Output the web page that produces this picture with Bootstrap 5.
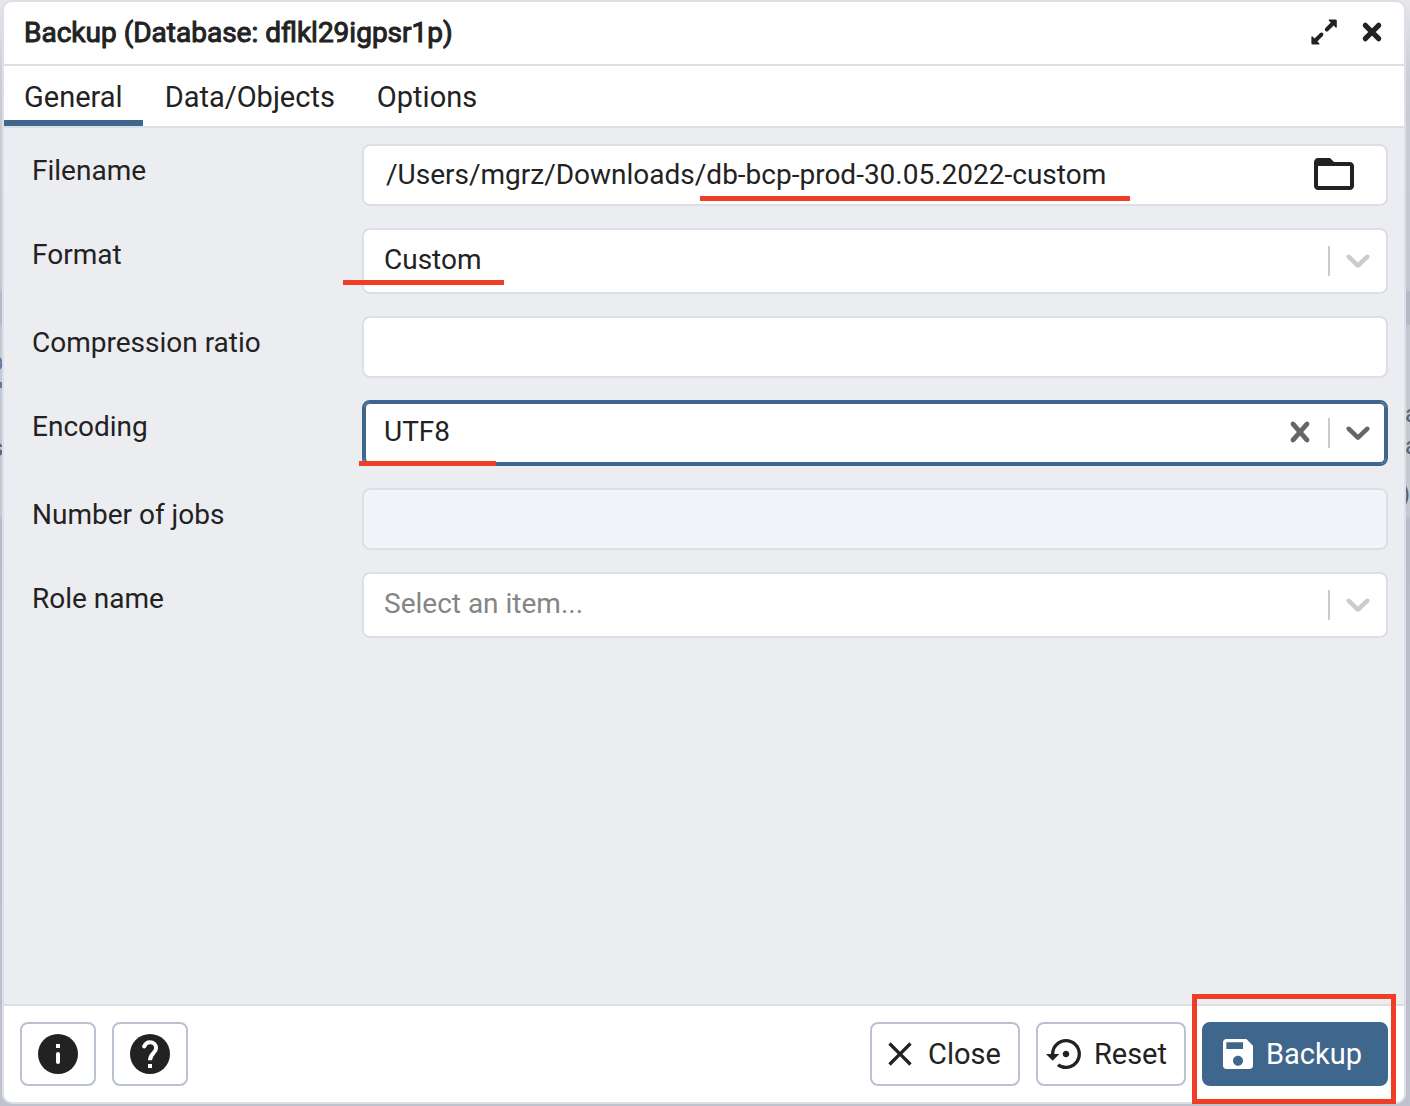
<!DOCTYPE html>
<html lang="en">
<head>
<meta charset="utf-8">
<meta name="viewport" content="width=device-width, initial-scale=1">
<title>Backup</title>
<link rel="stylesheet" href="https://cdn.jsdelivr.net/npm/bootstrap@5.3.0/dist/css/bootstrap.min.css">
<style>
  :root { --ink: #222; --line: #dddfe6; --brand: #3f668d; --pen: #ee3f26; --edge: #bac1d0; }
  body { font-family: Roboto, "Liberation Sans", sans-serif; font-size: 28px; line-height: 36px; color: var(--ink);
    background: linear-gradient(#e6e6eb 0, #c9ccd5 80px, #c3c8d0 290px, #b5b9c6 292px, #b5b9c6 324px, #c3c8d0 326px, #c3c8d0 515px, #b8bcc8 520px, #bec2ce 100%); }
  svg { display: block; fill: currentColor; flex: none; }
  .behind { z-index: 0; color: #5c616b; font-size: 24px; line-height: 32px; }
  .behind-left { left: -10px; top: 346px; color: #5a7ba0; }
  .behind-left2 { left: -9px; top: 432px; }
  .behind-right { right: -8px; top: 398px; }
  .behind-right2 { right: 0; top: 478px; }
  .behind-tab { left: 0; top: 382px; width: 2px; height: 6px; background: #5a7ba0; }
  .screen { min-height: 100vh; padding: 0 4px 2px 2px; }
  .dialog-box { border: 2px solid var(--line); border-radius: 10px; background: #fff; z-index: 1; }
  .title-bar { height: 64px; padding: 0 12px 2px 20px; border-bottom: 2px solid var(--line); }
  .title-bar h1 { font-size: 28px; font-weight: 400; line-height: 36px; padding-top: 2px; -webkit-text-stroke: 1px currentColor; }
  .plain-btn { border: 0; background: none; padding: 0; color: inherit; }
  .tab-strip { border-bottom: 2px solid var(--line); gap: 2px; }
  .tab-strip .nav-link { height: 60px; padding: 6px 20px 0; font-size: 29px; line-height: 50px; color: var(--ink); border-radius: 0; border-bottom: 6px solid transparent; }
  .tab-strip .nav-link.active { border-bottom-color: var(--brand); }
  .form-area { background: #ecedf1; padding: 16px; gap: 22px; }
  .form-area .form-label { padding: 9px 12px 0; margin: 0; }
  .form-area .row { padding: 0; }
  .field { border: 2px solid var(--line); border-radius: 8px; background: #fff; height: 62px; width: 100%; }
  .field-select { height: 66px; }
  .field input, .field select { border: 0; outline: 0; background: none; color: inherit; appearance: none; font-size: 28px; line-height: 36px; min-width: 0; height: 100%; padding: 0 20px 2px; flex: 1; }
  .field .path-input { padding: 0 22px 2px; }
  .field select.empty { color: #858585; }
  .field.off { background: #f3f4f9; }
  .tools { gap: 8px; padding-right: 8px; color: #ccc; pointer-events: none; }
  .tools i { width: 2px; height: 30px; background: #ccc; }
  .tools svg { margin-bottom: 2px; }
  .field.focused { border-color: var(--brand); box-shadow: inset 0 0 0 2px var(--brand); }
  .focused svg { color: #666; }
  .folder-btn { margin-right: 28px; padding-bottom: 2px; }
  .pen-line { position: absolute; height: 5px; background: var(--pen); z-index: 2; }
  .pen-file { left: 338px; top: 52px; width: 430px; }
  .pen-format { left: -19px; top: 52px; width: 161px; }
  .pen-enc { left: -3px; bottom: 0; width: 137px; }
  .pen-box { position: absolute; inset: -28px -8px -18px -10px; border: 5px solid var(--pen); pointer-events: none; }
  .foot { border-top: 2px solid var(--line); padding: 16px; gap: 16px; }
  .foot .btn { height: 64px; border: 2px solid var(--edge); border-radius: 8px; background: #fff; color: var(--ink); font-size: 29px; line-height: 36px; gap: 8px; padding: 0 17px 0 8px; }
  .foot .btn-square { width: 76px; padding: 0; }
  .foot .btn-main { background: var(--brand); border-color: var(--brand); color: #fff; padding: 0 24px 0 14px; }
</style>
<script src="https://cdn.jsdelivr.net/npm/bootstrap@5.3.0/dist/js/bootstrap.bundle.min.js"></script>
</head>
<body>
<svg class="d-none" aria-hidden="true">
  <symbol id="chevron" viewBox="0 0 20 20"><path d="M4.516 7.548c.436-.446 1.043-.481 1.576 0L10 11.295l3.908-3.747c.533-.481 1.141-.446 1.574 0 .436.445.408 1.197 0 1.615-.406.418-4.695 4.502-4.695 4.502-.217.223-.502.335-.787.335s-.57-.112-.789-.335c0 0-4.287-4.084-4.695-4.502s-.436-1.17 0-1.615z"/></symbol>
</svg>
<div class="screen d-flex position-relative overflow-hidden">
  <div aria-hidden="true">
    <span class="behind behind-left position-absolute">p</span>
    <span class="behind behind-tab position-absolute"></span>
    <span class="behind behind-left2 position-absolute">s</span>
    <span class="behind behind-right position-absolute">a<br>a</span>
    <span class="behind behind-right2 position-absolute">)</span>
  </div>
  <main class="dialog-box d-flex flex-column flex-grow-1 position-relative">
    <header class="title-bar d-flex align-items-center justify-content-between">
      <h1 class="m-0">Backup (Database: dflkl29igpsr1p)</h1>
      <div class="d-flex align-items-center gap-2">
        <button class="plain-btn" type="button" aria-label="Maximize">
          <svg width="40" height="40" viewBox="0 0 40 40"><path d="M25.500 7.500h6q1.300 0 1.300 1.300v6q0 1.500-1.200.6l-1.900-1.900-5.600 5.600q-1.500 1.100-2.700-.2-1.300-1.300-.2-2.700l5.600-5.600-1.900-1.900q-.8-1.200.6-1.200zM14.700 32.500h-6q-1.300 0-1.300-1.300v-6q0-1.500 1.200-.6l1.900 1.900 5.600-5.600q1.500-1.100 2.700.2 1.300 1.300.2 2.700l-5.600 5.600 1.900 1.900q.8 1.200-.6 1.200z"/></svg>
        </button>
        <button class="plain-btn" type="button" aria-label="Close dialog">
          <svg width="40" height="40" viewBox="0 0 40 40"><path d="M13.300 13.300l13.400 13.400M26.700 13.300L13.300 26.700" stroke="currentColor" stroke-width="5.200" stroke-linecap="round"/></svg>
        </button>
      </div>
    </header>
    <nav class="nav tab-strip" aria-label="Backup settings">
      <a class="nav-link active" href="#general" aria-current="page">General</a>
      <a class="nav-link" href="#objects">Data/Objects</a>
      <a class="nav-link" href="#options">Options</a>
    </nav>
    <form class="form-area d-flex flex-column flex-grow-1" id="general">
      <div class="row g-0">
        <label class="form-label col-3" for="filename">Filename</label>
        <div class="col-9 position-relative">
          <div class="field d-flex align-items-center">
            <input class="path-input" id="filename" type="text" value="/Users/mgrz/Downloads/db-bcp-prod-30.05.2022-custom">
            <button class="plain-btn folder-btn" type="button" aria-label="Select file">
              <svg width="48" height="48" viewBox="0 0 24 24"><path d="M20 6h-8l-2-2H4c-1.100 0-1.990.9-1.990 2L2 18c0 1.100.9 2 2 2h16c1.100 0 2-.9 2-2V8c0-1.100-.9-2-2-2zm0 12H4V8h16v10z"/></svg>
            </button>
          </div>
          <span class="pen-line pen-file"></span>
        </div>
      </div>
      <div class="row g-0">
        <label class="form-label col-3" for="format">Format</label>
        <div class="col-9 position-relative">
          <div class="field field-select d-flex align-items-center">
            <select id="format"><option>Custom</option></select>
            <span class="tools d-flex align-items-center"><i></i><svg width="40" height="40"><use href="#chevron"/></svg></span>
          </div>
          <span class="pen-line pen-format"></span>
        </div>
      </div>
      <div class="row g-0">
        <label class="form-label col-3" for="ratio">Compression ratio</label>
        <div class="col-9"><div class="field d-flex"><input id="ratio" type="text"></div></div>
      </div>
      <div class="row g-0">
        <label class="form-label col-3" for="encoding">Encoding</label>
        <div class="col-9 position-relative">
          <div class="field field-select focused d-flex align-items-center">
            <select id="encoding"><option>UTF8</option></select>
            <span class="tools d-flex align-items-center">
              <button class="plain-btn" type="button" aria-label="Clear encoding">
                <svg width="40" height="40" viewBox="0 0 20 20"><path d="M14.348 14.849c-.469.469-1.229.469-1.697 0L10 11.819l-2.651 3.029c-.469.469-1.229.469-1.697 0-.469-.469-.469-1.229 0-1.697l2.758-3.150-2.759-3.152c-.469-.469-.469-1.228 0-1.697s1.228-.469 1.697 0L10 8.183l2.651-3.031c.469-.469 1.228-.469 1.697 0s.469 1.229 0 1.697l-2.758 3.152 2.758 3.150c.469.469.469 1.229 0 1.698z"/></svg>
              </button>
              <i></i><svg width="40" height="40"><use href="#chevron"/></svg>
            </span>
          </div>
          <span class="pen-line pen-enc"></span>
        </div>
      </div>
      <div class="row g-0">
        <label class="form-label col-3" for="jobs">Number of jobs</label>
        <div class="col-9"><div class="field off d-flex"><input id="jobs" type="text" disabled></div></div>
      </div>
      <div class="row g-0">
        <label class="form-label col-3" for="role">Role name</label>
        <div class="col-9">
          <div class="field field-select d-flex align-items-center">
            <select class="empty" id="role"><option>Select an item...</option></select>
            <span class="tools d-flex align-items-center"><i></i><svg width="40" height="40"><use href="#chevron"/></svg></span>
          </div>
        </div>
      </div>
    </form>
    <footer class="foot d-flex align-items-center">
      <button class="btn btn-square d-flex align-items-center justify-content-center" type="button" aria-label="SQL help">
        <svg width="40" height="40" viewBox="0 0 40 40"><circle cx="20" cy="20" r="20"/><path fill="#fff" d="M18 10h4v4h-4z"/><rect fill="#fff" x="18" y="18" width="4" height="12" rx="2"/></svg>
      </button>
      <button class="btn btn-square d-flex align-items-center justify-content-center" type="button" aria-label="Help">
        <svg width="40" height="40" viewBox="0 0 40 40"><circle cx="20" cy="20" r="20"/><path d="M14.200 12.400C15.200 9.600 17.300 8 20 8c3.500 0 6.100 2.500 6.100 5.700 0 5-6.100 5.600-6.100 12.300" transform="translate(0 .2)" fill="none" stroke="#fff" stroke-width="4"/><circle cx="14.200" cy="12.600" r="2" fill="#fff"/><path fill="#fff" d="M18 30h4v4h-4z"/></svg>
      </button>
      <button class="btn d-flex align-items-center ms-auto" type="button">
        <svg width="40" height="40" viewBox="0 0 24 24"><path d="M19 6.410L17.590 5 12 10.590 6.410 5 5 6.410 10.590 12 5 17.590 6.410 19 12 13.410 17.590 19 19 17.590 13.410 12z"/></svg>
        Close
      </button>
      <button class="btn d-flex align-items-center" type="reset" form="general">
        <svg width="40" height="40" viewBox="0 0 24 24"><path d="M14 12c0-1.100-.9-2-2-2s-2 .9-2 2 .9 2 2 2 2-.9 2-2zm-2-9c-4.970 0-9 4.030-9 9H0l4 4 4-4H5c0-3.870 3.130-7 7-7s7 3.130 7 7-3.130 7-7 7c-1.510 0-2.910-.49-4.060-1.300l-1.420 1.440C8.040 20.300 9.940 21 12 21c4.970 0 9-4.030 9-9s-4.030-9-9-9z"/></svg>
        Reset
      </button>
      <div class="position-relative">
        <button class="btn btn-main d-flex align-items-center" type="submit" form="general">
          <svg width="40" height="40" viewBox="0 0 24 24"><path d="M17 3H5c-1.110 0-2 .9-2 2v14c0 1.100.89 2 2 2h14c1.100 0 2-.9 2-2V7l-4-4zm-5 16c-1.660 0-3-1.340-3-3s1.340-3 3-3 3 1.340 3 3-1.340 3-3 3zm3-10H5V5h10v4z"/></svg>
          Backup
        </button>
        <span class="pen-box"></span>
      </div>
    </footer>
  </main>
</div>
</body>
</html>
